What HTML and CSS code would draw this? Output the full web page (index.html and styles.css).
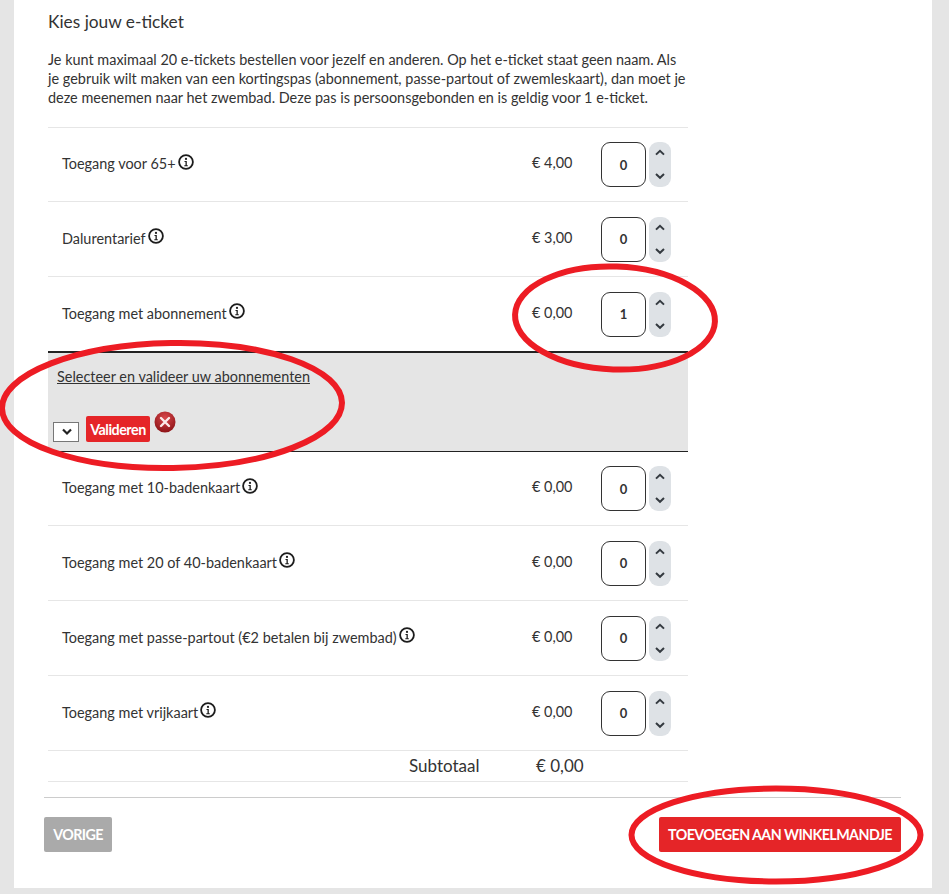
FILE: index.html
```html
<!DOCTYPE html>
<html lang="en">
<head>
  <meta charset="UTF-8">
  <title>Kies jouw e-ticket</title>
  <link rel="stylesheet" href="styles.css">
</head>
<body>
  <svg width="0" height="0" class="defs">
    <symbol id="info" viewBox="0 0 16 16">
      <circle cx="8" cy="8" r="6.9" fill="none" stroke="#1c1c1c" stroke-width="1.8"/>
      <circle cx="8" cy="4.9" r="1.1" fill="#1c1c1c"/>
      <path d="M6.5 6.9h2.3v4.3h1v1H6.3v-1h1.2V7.9h-1z" fill="#1c1c1c"/>
    </symbol>
    <symbol id="stepper" viewBox="0 0 22 45">
      <path d="M7 12.6 11 8.8l4 3.8M7 32 11 35.8 15 32" fill="none" stroke="#343a40" stroke-width="2"/>
    </symbol>
  </svg>

  <div class="panel">
    <div class="content">
      <h1>Kies jouw e-ticket</h1>
      <p class="intro">Je kunt maximaal 20 e-tickets bestellen voor jezelf en anderen. Op het e-ticket staat geen naam. Als je gebruik wilt maken van een kortingspas (abonnement, passe-partout of zwemleskaart), dan moet je deze meenemen naar het zwembad. Deze pas is persoonsgebonden en is geldig voor 1 e-ticket.</p>

      <div class="tickets">
        <div class="row first">
          <span class="label">Toegang voor 65+<svg class="info"><use href="#info"/></svg></span>
          <span class="price">€ 4,00</span>
          <div class="qty">0</div>
          <svg class="stepper"><use href="#stepper"/></svg>
        </div>
        <div class="row">
          <span class="label">Dalurentarief<svg class="info"><use href="#info"/></svg></span>
          <span class="price">€ 3,00</span>
          <div class="qty">0</div>
          <svg class="stepper"><use href="#stepper"/></svg>
        </div>
        <div class="row open">
          <span class="label">Toegang met abonnement<svg class="info"><use href="#info"/></svg></span>
          <span class="price">€ 0,00</span>
          <div class="qty">1</div>
          <svg class="stepper"><use href="#stepper"/></svg>
        </div>
        <div class="validate">
          <a class="validate-title" href="#">Selecteer en valideer uw abonnementen</a>
          <div class="validate-controls">
            <div class="select"><svg width="12" height="8" viewBox="0 0 12 8"><path d="M2 1.5 6 5.5l4-4" fill="none" stroke="#222" stroke-width="2.2"/></svg></div>
            <button class="btn-validate">Valideren</button>
            <svg class="remove" width="22" height="22" viewBox="0 0 22 22">
              <defs>
                <radialGradient id="redball" cx="50%" cy="30%" r="70%">
                  <stop offset="0" stop-color="#d8464a"/>
                  <stop offset="1" stop-color="#8e1418"/>
                </radialGradient>
              </defs>
              <circle cx="11" cy="11" r="10.5" fill="url(#redball)"/>
              <path d="M7 7l8 8M15 7l-8 8" stroke="#fbeaea" stroke-width="2.4" stroke-linecap="round"/>
            </svg>
          </div>
        </div>
        <div class="row after-open">
          <span class="label">Toegang met 10-badenkaart<svg class="info"><use href="#info"/></svg></span>
          <span class="price">€ 0,00</span>
          <div class="qty">0</div>
          <svg class="stepper"><use href="#stepper"/></svg>
        </div>
        <div class="row">
          <span class="label">Toegang met 20 of 40-badenkaart<svg class="info"><use href="#info"/></svg></span>
          <span class="price">€ 0,00</span>
          <div class="qty">0</div>
          <svg class="stepper"><use href="#stepper"/></svg>
        </div>
        <div class="row">
          <span class="label">Toegang met passe-partout (€2 betalen bij zwembad)<svg class="info"><use href="#info"/></svg></span>
          <span class="price">€ 0,00</span>
          <div class="qty">0</div>
          <svg class="stepper"><use href="#stepper"/></svg>
        </div>
        <div class="row">
          <span class="label">Toegang met vrijkaart<svg class="info"><use href="#info"/></svg></span>
          <span class="price">€ 0,00</span>
          <div class="qty">0</div>
          <svg class="stepper"><use href="#stepper"/></svg>
        </div>
        <div class="subtotal">
          <span class="subtotal-label">Subtotaal</span>
          <span class="subtotal-value">€ 0,00</span>
        </div>
      </div>
    </div>

    <div class="actions">
      <button class="btn btn-back">VORIGE</button>
      <button class="btn btn-add">TOEVOEGEN AAN WINKELMANDJE</button>
    </div>
  </div>

  <!-- red markings drawn over the screenshot -->
  <svg class="marks" width="949" height="894" viewBox="0 0 949 894">
    <ellipse cx="615" cy="318" rx="100" ry="51.5" transform="rotate(2 615 318)"/>
    <ellipse cx="172" cy="405.5" rx="170" ry="62.5" transform="rotate(-1 172 405.5)"/>
    <ellipse cx="776" cy="835" rx="144.5" ry="46.5"/>
  </svg>
</body>
</html>
```

FILE: styles.css
```css
body {
  margin: 0;
  height: 894px;
  overflow: hidden;
  position: relative;
  background-color: #e5e5e5;
  font-family: "Lato", sans-serif;
  color: #333;
}
.defs {
  position: absolute;
}
.panel {
  margin-left: 14px;
  width: 918px;
  height: 888px;
  background-color: #fff;
  overflow: hidden;
}
.content {
  margin-left: 34px;
  width: 640px;
}
h1 {
  margin: 12px 0 0;
  font-size: 17.3px;
  line-height: 20px;
  font-weight: 400;
}
.intro {
  margin: 18px 0 0;
  font-size: 14.45px;
  line-height: 19px;
}
.tickets {
  margin-top: 20px;
}
.row {
  display: flex;
  align-items: center;
  height: 74px;
  border-bottom: 1px solid #e6e6e6;
  padding-left: 14px;
}
.row.first {
  height: 73px;
  border-top: 1px solid #e6e6e6;
}
.row.open {
  border-bottom: 2px solid #222;
}
.row.after-open {
  height: 73px;
}
.label {
  flex: 1;
  font-size: 14.45px;
}
.info {
  width: 16px;
  height: 16px;
  margin-left: 2px;
  position: relative;
  top: -4px;
  vertical-align: middle;
}
.price {
  width: 69px;
  font-size: 14.45px;
  position: relative;
  top: -2px;
}
.qty {
  width: 43px;
  height: 43px;
  border: 1px solid #333;
  border-radius: 9px;
  display: flex;
  align-items: center;
  justify-content: center;
  font-size: 13px;
  font-weight: 700;
}
.stepper {
  width: 22px;
  height: 45px;
  margin-left: 3px;
  margin-right: 17px;
  background-color: #dee2e6;
  border-radius: 9px;
}
.validate {
  height: 98px;
  background-color: #e5e5e5;
  border-bottom: 1px solid #222;
}
.validate-title {
  display: block;
  padding: 14px 0 0 9px;
  font-size: 14.45px;
  line-height: 19px;
  color: #333;
}
.validate-controls {
  display: flex;
  align-items: flex-start;
  margin: 30px 0 0 5px;
}
.select {
  width: 23px;
  height: 18px;
  margin-top: 6px;
  background-color: #fff;
  border: 1px solid #777;
  display: flex;
  align-items: center;
  justify-content: center;
  padding-left: 1px;
}
.btn-validate {
  margin-left: 7px;
  width: 64px;
  height: 26px;
  padding: 0;
  border: none;
  border-radius: 2px;
  background-color: #e52528;
  color: #fff;
  font-family: "Lato", sans-serif;
  font-size: 14.3px;
  font-weight: 700;
  letter-spacing: -0.48px;
}
.remove {
  margin: -5px 0 0 4px;
}
.subtotal {
  display: flex;
  height: 28px;
  padding-bottom: 2px;
  align-items: center;
  border-bottom: 1px solid #e6e6e6;
  font-size: 17px;
}
.subtotal-label {
  margin-left: 361px;
  width: 127px;
}
.actions {
  margin: 15px 31px 0 30px;
  padding-top: 19px;
  border-top: 1px solid #ccc;
  display: flex;
  justify-content: space-between;
}
.btn {
  height: 35px;
  padding: 0;
  border: none;
  border-radius: 2px;
  color: #fff;
  font-family: "Lato", sans-serif;
  font-size: 14.3px;
  font-weight: 700;
  letter-spacing: -0.58px;
}
.btn-back {
  width: 68px;
  background-color: #aaa;
}
.btn-add {
  width: 242px;
  background-color: #e52528;
}
.marks {
  position: absolute;
  left: 0;
  top: 0;
  pointer-events: none;
}
.marks ellipse {
  fill: none;
  stroke: #ed1c24;
  stroke-width: 6;
}
```
